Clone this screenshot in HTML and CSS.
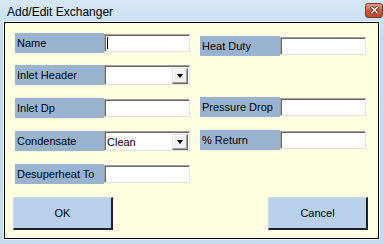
FILE: index.html
```html
<!DOCTYPE html>
<html lang="en">
<head>
    <meta charset="UTF-8">
    <title>Add/Edit Exchanger</title>
    <link rel="stylesheet" href="styles.css">
</head>
<body>
    <div class="window">
        <div class="titlebar">
            <span class="title">Add/Edit Exchanger</span>
            <span class="close">
                <svg width="9" height="8" viewBox="0 0 9 8">
                    <path d="M1 0.5 L8 7.5 M8 0.5 L1 7.5" stroke="#5a2a22" stroke-width="3.2"/>
                    <path d="M1.3 0.8 L7.7 7.2 M7.7 0.8 L1.3 7.2" stroke="#ffffff" stroke-width="1.6"/>
                </svg>
            </span>
        </div>
        <div class="client">
            <div class="fields">
                <div class="col col-left">
                    <div class="row">
                        <span class="label">Name</span>
                        <span class="textbox"><span class="caret"></span></span>
                    </div>
                    <div class="row">
                        <span class="label">Inlet Header</span>
                        <span class="combo"><span class="combo-text"></span><span class="drop"><span class="arrow"></span></span></span>
                    </div>
                    <div class="row">
                        <span class="label">Inlet Dp</span>
                        <span class="textbox"></span>
                    </div>
                    <div class="row">
                        <span class="label">Condensate</span>
                        <span class="combo"><span class="combo-text">Clean</span><span class="drop"><span class="arrow"></span></span></span>
                    </div>
                    <div class="row">
                        <span class="label">Desuperheat To</span>
                        <span class="textbox"></span>
                    </div>
                </div>
                <div class="col col-right">
                    <div class="row row-duty">
                        <span class="label">Heat Duty</span>
                        <span class="textbox"></span>
                    </div>
                    <div class="row row-drop">
                        <span class="label">Pressure Drop</span>
                        <span class="textbox"></span>
                    </div>
                    <div class="row">
                        <span class="label">% Return</span>
                        <span class="textbox"></span>
                    </div>
                </div>
            </div>
            <div class="buttons">
                <button class="btn">OK</button>
                <button class="btn">Cancel</button>
            </div>
        </div>
    </div>
</body>
</html>
```

FILE: styles.css
```css
body {
    margin: 0;
    font-family: "Liberation Sans", Arial, sans-serif;
    font-size: 11px;
}
.window {
    width: 384px;
    height: 244px;
    box-sizing: border-box;
    padding: 0 5px 5px 4px;
    background: linear-gradient(to bottom, #d6e8f6, #c2dbf0 40px, #c4dcf0);
}
.titlebar {
    height: 22px;
    display: flex;
    align-items: center;
    justify-content: space-between;
}
.title {
    margin-left: 3px;
    margin-top: 1px;
    font-size: 12px;
    color: #000;
}
.close {
    width: 16px;
    height: 13px;
    margin-right: -4px;
    margin-top: -2px;
    border: 1px solid #7d3b30;
    border-radius: 3px;
    background: linear-gradient(to bottom, #e89a85, #d05a40 50%, #c2422a);
    display: flex;
    align-items: center;
    justify-content: center;
}
.client {
    border: 1px solid #000;
    background: #ffffe1;
    padding: 10px 10px 8px 10px;
    box-shadow: 0 0 0 1px #eef4fa;
}
.fields {
    display: flex;
    gap: 10px;
}
.col {
    display: flex;
    flex-direction: column;
}
.row {
    display: flex;
    align-items: center;
    height: 20px;
    margin-bottom: 13px;
}
.col-left .row:first-child {
    margin-bottom: 12px;
}
.col-left .row:last-child {
    margin-bottom: 0;
}
.label {
    width: 87px;
    height: 20px;
    line-height: 20px;
    padding-left: 2px;
    background: #99b4d1;
    color: #000;
    white-space: nowrap;
}
.col-right .label {
    width: 78px;
    padding-left: 2px;
}
.col-right {
    padding-top: 3px;
}
.row-drop {
    margin-top: 28px;
}
.textbox {
    width: 86px;
    height: 18px;
    box-sizing: border-box;
    background: #fff;
    border: 1px solid;
    border-color: #a0a0a0 #e3e3e3 #e3e3e3 #a0a0a0;
    box-shadow: inset 1px 1px 0 #696969;
    position: relative;
}
.caret {
    position: absolute;
    left: 2px;
    top: 2px;
    width: 1px;
    height: 12px;
    background: #000;
}
.combo {
    width: 86px;
    height: 20px;
    box-sizing: border-box;
    background: #fff;
    border: 1px solid;
    border-color: #a0a0a0 #e3e3e3 #e3e3e3 #a0a0a0;
    box-shadow: inset 1px 1px 0 #696969;
    display: flex;
    align-items: center;
    justify-content: space-between;
    padding: 2px 1px 1px 2px;
}
.combo-text {
    color: #000;
}
.drop {
    width: 16px;
    height: 16px;
    box-sizing: border-box;
    background: #f0f0f0;
    border: 1px solid;
    border-color: #e3e3e3 #696969 #696969 #e3e3e3;
    box-shadow: inset -1px -1px 0 #a0a0a0, inset 1px 1px 0 #fff;
    display: flex;
    align-items: center;
    justify-content: center;
}
.arrow {
    width: 0;
    height: 0;
    border-left: 3.5px solid transparent;
    border-right: 3.5px solid transparent;
    border-top: 4px solid #000;
    margin-top: 1px;
}
.buttons {
    display: flex;
    justify-content: space-between;
    margin-top: 13px;
    margin-left: -2px;
}
.btn {
    width: 100px;
    height: 33px;
    box-sizing: border-box;
    font-family: "Liberation Sans", Arial, sans-serif;
    font-size: 11px;
    color: #000;
    background: #b9d1ea;
    border: 1px solid;
    border-width: 1px 2px 2px 1px;
    border-color: #c8dbee #1c2232 #1c2232 #c8dbee;
    padding: 0;
}
```
